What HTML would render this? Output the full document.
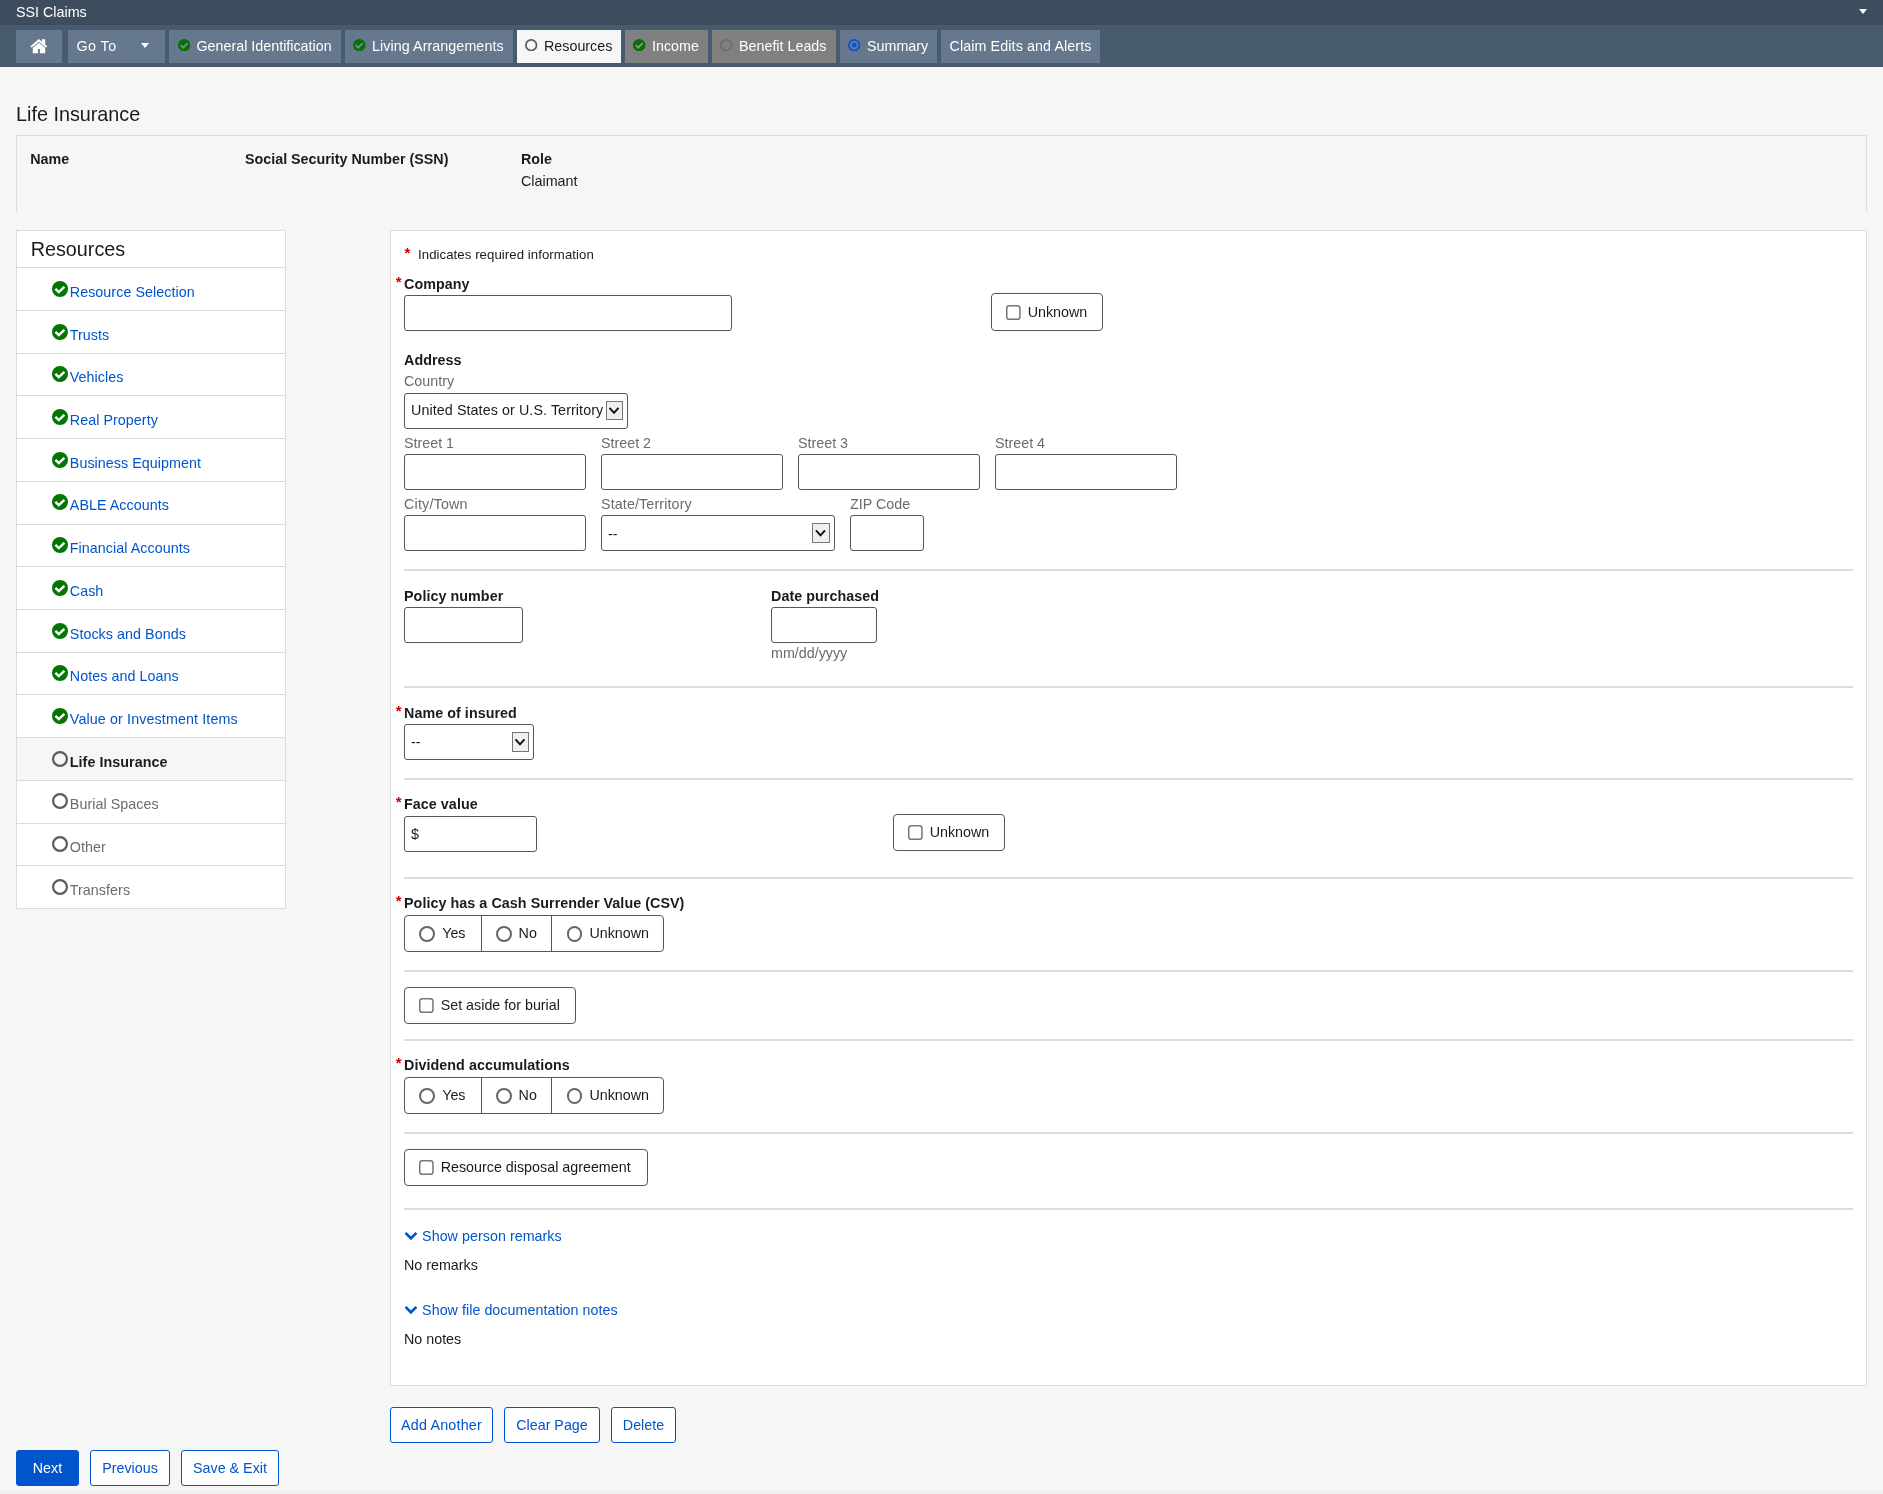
<!DOCTYPE html>
<html lang="en">
<head>
<meta charset="utf-8">
<title>SSI Claims - Life Insurance</title>
<style>
*{box-sizing:border-box;margin:0;padding:0}
html,body{width:1883px;height:1494px;overflow:hidden}
body{background:#f6f6f6;font-family:"Liberation Sans",Arial,sans-serif;font-size:14.3px;color:#1b1b1b;position:relative}
#pg{position:absolute;left:0;top:0;width:1883px;height:1494px;will-change:transform}
.abs{position:absolute}
#topbar{position:absolute;left:0;top:0;width:1883px;height:25px;background:#3d4d5d;color:#fff}
#topbar .t{position:absolute;left:16px;top:4px;font-size:14.3px;line-height:17px}
#topbar .caret{position:absolute;left:1859.3px;top:9px;width:0;height:0;border-left:4.7px solid transparent;border-right:4.7px solid transparent;border-top:5.6px solid #fff}
#nav{position:absolute;left:0;top:25px;width:1883px;height:42px;background:#485a6d}
.tab{position:absolute;top:5px;height:33px;background:#65788e;color:#fff;font-size:14.3px;line-height:33px;white-space:nowrap}
.tab .lbl{position:absolute;top:0}
.tab.cur{background:#f6f6f6;color:#1b1b1b}
.tab.dis{background:#808080;color:#fff}
.ic{position:absolute}
h1{position:absolute;left:16px;top:102px;font-size:19.8px;font-weight:normal;line-height:24px;color:#1b1b1b}
#person{position:absolute;left:16px;top:135px;width:1851px;height:77px;border:1px solid #dcdcdc;border-bottom:none}
#person b{position:absolute;font-size:14.3px;line-height:16px}
#person span{position:absolute;font-size:14.3px;line-height:16px}
#side{position:absolute;left:16px;top:230px;width:270px;height:679px;background:#fff;border:1px solid #dcdcdc}
#side h2{position:absolute;left:13.7px;top:6px;font-size:19.8px;font-weight:normal;line-height:24px}
.si{position:absolute;left:0;width:268px;height:43px;border-top:1px solid #dcdcdc;font-size:14.3px}
.si a{position:absolute;left:52.8px;top:16px;letter-spacing:.05px;line-height:17px;color:#0055cc;text-decoration:none}
.si.off a{color:#6b6b6b}
.si.cur{background:#f6f6f6}
.si.cur a{color:#1b1b1b;font-weight:bold}
.si svg{position:absolute;left:35px;top:13.1px}
.si.u a{top:15px}
.si.u svg{top:12.1px}
#form{position:absolute;left:390px;top:230px;width:1477px;height:1156px;background:#fff;border:1px solid #dcdcdc}
.lab{position:absolute;font-weight:bold;font-size:14.3px;line-height:16px;white-space:nowrap;letter-spacing:.06px}
.sub{position:absolute;font-size:14.3px;line-height:16px;color:#6b6b6b;white-space:nowrap}
.req{position:absolute;color:#c00;font-weight:bold;font-size:15px;line-height:16px}
.inp{position:absolute;height:36px;border:1px solid #565656;border-radius:3px;background:#fff}
.hr{position:absolute;left:13px;width:1449px;height:2px;background:#dcdcdc}
.dv{position:absolute;top:0;width:1px;height:100%;background:#565656}
.box{position:absolute;height:38px;border:1px solid #565656;border-radius:4px;background:#fff;font-size:14.5px;line-height:36px}
.cb{position:absolute;width:16px;height:16px}
.rd{position:absolute;width:15.8px;height:15.8px;border:2px solid #666;border-radius:50%;background:#fff}
.txt{position:absolute;font-size:14.3px;line-height:17px;white-space:nowrap}
.lnk{position:absolute;font-size:14.3px;line-height:17px;color:#0055cc;white-space:nowrap;letter-spacing:.03px}
.btn{position:absolute;height:36px;border:1px solid #0055cc;border-radius:3px;background:#fff;color:#0055cc;font-size:14.3px;line-height:34px;text-align:center}
.btn.pri{background:#0055cc;border-color:#0055cc;color:#fff}
.selarrow{position:absolute;width:17px;height:19px;border:1px solid #767676;background:#efefef}
#foot{position:absolute;left:0;top:1490px;width:1883px;height:4px;background:#f0f0f0}
</style>
</head>
<body>
<div id="pg">
<div id="topbar"><div class="t">SSI Claims</div><div class="caret"></div></div>
<div id="nav">
<div class="tab" style="left:16px;width:46px"><svg class="ic" style="left:14px;top:8px" width="18" height="16" viewBox="0 0 18 16"><path fill="#fff" d="M0.4 8.3 L8.9 1 L17.2 8.3 L15.9 9.8 L8.9 3.7 L1.7 9.8 Z"/><path fill="#fff" d="M12 1.2 H15.2 V7 L12 4.2 Z"/><path fill="#fff" d="M8.9 4.7 L15.2 10.1 V15.2 H9.9 V11 H8 V15.2 H2.8 V10.1 Z"/></svg></div>
<div class="tab" style="left:68px;width:97px"><span class="lbl" style="left:8.4px;word-spacing:.3px;letter-spacing:.38px">Go To</span><span class="abs" style="left:73px;top:13px;width:0;height:0;border-left:4.5px solid transparent;border-right:4.5px solid transparent;border-top:5.5px solid #fff"></span></div>
<div class="tab" style="left:169px;width:172px"><svg class="ic ck" style="left:9px;top:8.7px" width="12.4" height="12.4" viewBox="0 0 12.4 12.4"><circle cx="6.2" cy="6.2" r="6.2" fill="#057205"/><path d="M2.7 6.2 L5.2 8.7 L9.7 4.2" fill="none" stroke="#7a8ba0" stroke-width="1.7"/></svg><span class="lbl" style="left:27.5px">General Identification</span></div>
<div class="tab" style="left:345px;width:168px"><svg class="ic ck" style="left:8.3px;top:8.7px" width="12.4" height="12.4" viewBox="0 0 12.4 12.4"><circle cx="6.2" cy="6.2" r="6.2" fill="#057205"/><path d="M2.7 6.2 L5.2 8.7 L9.7 4.2" fill="none" stroke="#7a8ba0" stroke-width="1.7"/></svg><span class="lbl" style="left:27px;letter-spacing:.07px">Living Arrangements</span></div>
<div class="tab cur" style="left:517px;width:104px"><svg class="ic" style="left:8.4px;top:8.6px" width="12.4" height="12.4" viewBox="0 0 12.4 12.4"><circle cx="6.2" cy="6.2" r="5.3" fill="none" stroke="#5c5c5c" stroke-width="1.7"/></svg><span class="lbl" style="left:27px">Resources</span></div>
<div class="tab dis" style="left:625px;width:83px"><svg class="ic ck" style="left:8.3px;top:8.7px" width="12.4" height="12.4" viewBox="0 0 12.4 12.4"><circle cx="6.2" cy="6.2" r="6.2" fill="#057205"/><path d="M2.7 6.2 L5.2 8.7 L9.7 4.2" fill="none" stroke="#939393" stroke-width="1.7"/></svg><span class="lbl" style="left:27px">Income</span></div>
<div class="tab dis" style="left:712px;width:124px"><svg class="ic" style="left:8.4px;top:8.6px" width="12.4" height="12.4" viewBox="0 0 12.4 12.4"><circle cx="6.2" cy="6.2" r="5.3" fill="none" stroke="#6c6c6c" stroke-width="1.7"/></svg><span class="lbl" style="left:27px">Benefit Leads</span></div>
<div class="tab" style="left:840px;width:97px"><svg class="ic" style="left:8.3px;top:8.7px" width="12.4" height="12.4" viewBox="0 0 12.4 12.4"><circle cx="6.2" cy="6.2" r="5.3" fill="none" stroke="#0b50d8" stroke-width="1.7"/><circle cx="6.2" cy="6.2" r="2.4" fill="#0b50d8"/></svg><span class="lbl" style="left:27px">Summary</span></div>
<div class="tab" style="left:941px;width:159px"><span class="lbl" style="left:8.5px;letter-spacing:.1px">Claim Edits and Alerts</span></div>
</div>
<h1>Life Insurance</h1>
<div id="person">
<b style="left:13.3px;top:15px">Name</b>
<b style="left:228px;top:15px">Social Security Number (SSN)</b>
<b style="left:504px;top:15px">Role</b>
<span style="left:504px;top:37px">Claimant</span>
</div>
<div id="side">
<h2>Resources</h2>
<div class="si" style="top:36px;height:43px"><svg width="16" height="16" viewBox="0 0 16 16"><circle cx="8" cy="8" r="8" fill="#057505"/><path d="M3.4 7.8 L6.8 11.1 L12.4 5.8" fill="none" stroke="#fff" stroke-width="2.4"/></svg><a>Resource Selection</a></div>
<div class="si" style="top:79px;height:43px"><svg width="16" height="16" viewBox="0 0 16 16"><circle cx="8" cy="8" r="8" fill="#057505"/><path d="M3.4 7.8 L6.8 11.1 L12.4 5.8" fill="none" stroke="#fff" stroke-width="2.4"/></svg><a>Trusts</a></div>
<div class="si u" style="top:122px;height:42px"><svg width="16" height="16" viewBox="0 0 16 16"><circle cx="8" cy="8" r="8" fill="#057505"/><path d="M3.4 7.8 L6.8 11.1 L12.4 5.8" fill="none" stroke="#fff" stroke-width="2.4"/></svg><a>Vehicles</a></div>
<div class="si" style="top:164px;height:43px"><svg width="16" height="16" viewBox="0 0 16 16"><circle cx="8" cy="8" r="8" fill="#057505"/><path d="M3.4 7.8 L6.8 11.1 L12.4 5.8" fill="none" stroke="#fff" stroke-width="2.4"/></svg><a>Real Property</a></div>
<div class="si" style="top:207px;height:43px"><svg width="16" height="16" viewBox="0 0 16 16"><circle cx="8" cy="8" r="8" fill="#057505"/><path d="M3.4 7.8 L6.8 11.1 L12.4 5.8" fill="none" stroke="#fff" stroke-width="2.4"/></svg><a>Business Equipment</a></div>
<div class="si u" style="top:250px;height:43px"><svg width="16" height="16" viewBox="0 0 16 16"><circle cx="8" cy="8" r="8" fill="#057505"/><path d="M3.4 7.8 L6.8 11.1 L12.4 5.8" fill="none" stroke="#fff" stroke-width="2.4"/></svg><a>ABLE Accounts</a></div>
<div class="si u" style="top:293px;height:42px"><svg width="16" height="16" viewBox="0 0 16 16"><circle cx="8" cy="8" r="8" fill="#057505"/><path d="M3.4 7.8 L6.8 11.1 L12.4 5.8" fill="none" stroke="#fff" stroke-width="2.4"/></svg><a>Financial Accounts</a></div>
<div class="si" style="top:335px;height:43px"><svg width="16" height="16" viewBox="0 0 16 16"><circle cx="8" cy="8" r="8" fill="#057505"/><path d="M3.4 7.8 L6.8 11.1 L12.4 5.8" fill="none" stroke="#fff" stroke-width="2.4"/></svg><a>Cash</a></div>
<div class="si" style="top:378px;height:43px"><svg width="16" height="16" viewBox="0 0 16 16"><circle cx="8" cy="8" r="8" fill="#057505"/><path d="M3.4 7.8 L6.8 11.1 L12.4 5.8" fill="none" stroke="#fff" stroke-width="2.4"/></svg><a>Stocks and Bonds</a></div>
<div class="si u" style="top:421px;height:42px"><svg width="16" height="16" viewBox="0 0 16 16"><circle cx="8" cy="8" r="8" fill="#057505"/><path d="M3.4 7.8 L6.8 11.1 L12.4 5.8" fill="none" stroke="#fff" stroke-width="2.4"/></svg><a>Notes and Loans</a></div>
<div class="si" style="top:463px;height:43px"><svg width="16" height="16" viewBox="0 0 16 16"><circle cx="8" cy="8" r="8" fill="#057505"/><path d="M3.4 7.8 L6.8 11.1 L12.4 5.8" fill="none" stroke="#fff" stroke-width="2.4"/></svg><a style="letter-spacing:.12px">Value or Investment Items</a></div>
<div class="si cur" style="top:506px;height:43px"><svg width="16" height="16" viewBox="0 0 16 16"><circle cx="8" cy="8" r="6.9" fill="none" stroke="#5c5c5c" stroke-width="2.2"/></svg><a>Life Insurance</a></div>
<div class="si off u" style="top:549px;height:43px"><svg width="16" height="16" viewBox="0 0 16 16"><circle cx="8" cy="8" r="6.9" fill="none" stroke="#5c5c5c" stroke-width="2.2"/></svg><a>Burial Spaces</a></div>
<div class="si off u" style="top:592px;height:42px"><svg width="16" height="16" viewBox="0 0 16 16"><circle cx="8" cy="8" r="6.9" fill="none" stroke="#5c5c5c" stroke-width="2.2"/></svg><a>Other</a></div>
<div class="si off" style="top:634px;height:43px"><svg width="16" height="16" viewBox="0 0 16 16"><circle cx="8" cy="8" r="6.9" fill="none" stroke="#5c5c5c" stroke-width="2.2"/></svg><a>Transfers</a></div>
</div>
<div id="form">
<span class="req" style="left:13.4px;top:13.6px">*</span>
<span class="txt" style="left:27px;top:16px;font-size:13.2px;line-height:16px;letter-spacing:.07px">Indicates required information</span>
<span class="req" style="left:4.7px;top:43.4px">*</span>
<span class="lab" style="left:13px;top:45px">Company</span>
<span class="inp" style="left:13px;top:64px;width:328px;height:36px"></span>
<span class="box" style="left:600px;top:62px;width:112px;height:38px"><svg class="cb" style="left:14.2px;top:11px" viewBox="0 0 16 16"><rect x="0.75" y="0.75" width="13.2" height="13.5" rx="2.6" fill="#fff" stroke="#767676" stroke-width="1.5"/></svg><span class="txt" style="left:35.7px;top:9.5px">Unknown</span></span>
<span class="lab" style="left:13px;top:121px">Address</span>
<span class="sub" style="left:13px;top:142px">Country</span>
<span class="inp" style="left:13px;top:162px;width:224px;height:36px"><span class="txt" style="left:6px;top:7.5px;letter-spacing:0.085px">United States or U.S. Territory</span><span class="selarrow" style="left:201px;top:7px;width:17px;height:19px"><svg width="15" height="17" viewBox="0 0 15 17" style="position:absolute;left:0;top:0"><path d="M2.5 5.8 L7 10.8 L11.5 5.8" fill="none" stroke="#111" stroke-width="2"/></svg></span></span>
<span class="sub" style="left:13px;top:204px">Street 1</span>
<span class="inp" style="left:13px;top:223px;width:182px;height:36px"></span>
<span class="sub" style="left:210px;top:204px">Street 2</span>
<span class="inp" style="left:210px;top:223px;width:182px;height:36px"></span>
<span class="sub" style="left:407px;top:204px">Street 3</span>
<span class="inp" style="left:407px;top:223px;width:182px;height:36px"></span>
<span class="sub" style="left:604px;top:204px">Street 4</span>
<span class="inp" style="left:604px;top:223px;width:182px;height:36px"></span>
<span class="sub" style="left:13px;top:265px;letter-spacing:0.19px">City/Town</span>
<span class="inp" style="left:13px;top:284px;width:182px;height:36px"></span>
<span class="sub" style="left:210px;top:265px;letter-spacing:0.12px">State/Territory</span>
<span class="inp" style="left:210px;top:284px;width:234px;height:36px"><span class="txt" style="left:6px;top:9.5px">--</span><span class="selarrow" style="left:210px;top:7px;width:18px;height:20px"><svg width="16" height="18" viewBox="0 0 16 18" style="position:absolute;left:0;top:0"><path d="M3 6.3 L7.5 11.3 L12 6.3" fill="none" stroke="#111" stroke-width="2"/></svg></span></span>
<span class="sub" style="left:459px;top:265px">ZIP Code</span>
<span class="inp" style="left:459px;top:284px;width:74px;height:36px"></span>
<span class="hr" style="top:338px"></span>
<span class="lab" style="left:13px;top:357px">Policy number</span>
<span class="inp" style="left:13px;top:376px;width:119px;height:36px"></span>
<span class="lab" style="left:380px;top:357px">Date purchased</span>
<span class="inp" style="left:380px;top:376px;width:106px;height:36px"></span>
<span class="sub" style="left:380px;top:414px">mm/dd/yyyy</span>
<span class="hr" style="top:455px"></span>
<span class="req" style="left:4.7px;top:471.5px">*</span>
<span class="lab" style="left:13px;top:474px">Name of insured</span>
<span class="inp" style="left:13px;top:493px;width:130px;height:36px"><span class="txt" style="left:6px;top:8.5px">--</span><span class="selarrow" style="left:107px;top:7px;width:17px;height:20px"><svg width="15" height="18" viewBox="0 0 15 18" style="position:absolute;left:0;top:0"><path d="M2.5 6.3 L7 11.3 L11.5 6.3" fill="none" stroke="#111" stroke-width="2"/></svg></span></span>
<span class="hr" style="top:547px"></span>
<span class="req" style="left:4.7px;top:563.4px">*</span>
<span class="lab" style="left:13px;top:565px">Face value</span>
<span class="inp" style="left:13px;top:585px;width:133px;height:36px"><span class="txt" style="left:6px;top:8.5px">$</span></span>
<span class="box" style="left:502px;top:583px;width:112px;height:37px"><svg class="cb" style="left:14.2px;top:10px" viewBox="0 0 16 16"><rect x="0.75" y="0.75" width="13.2" height="13.5" rx="2.6" fill="#fff" stroke="#767676" stroke-width="1.5"/></svg><span class="txt" style="left:35.7px;top:8.5px">Unknown</span></span>
<span class="hr" style="top:646px"></span>
<span class="req" style="left:4.7px;top:662.4px">*</span>
<span class="lab" style="left:13px;top:664px">Policy has a Cash Surrender Value (CSV)</span>
<span class="box" style="left:13px;top:684px;width:260px;height:37px"><span class="rd" style="left:14.3px;top:10.3px"></span><span class="txt" style="left:37.2px;top:9px">Yes</span><span class="dv" style="left:76px"></span><span class="rd" style="left:91.1px;top:10.3px"></span><span class="txt" style="left:113.6px;top:9px">No</span><span class="dv" style="left:146px"></span><span class="rd" style="left:161.5px;top:10.3px"></span><span class="txt" style="left:184.4px;top:9px">Unknown</span></span>
<span class="hr" style="top:739px"></span>
<span class="box" style="left:13px;top:756px;width:172px;height:37px"><svg class="cb" style="left:14.2px;top:10px" viewBox="0 0 16 16"><rect x="0.75" y="0.75" width="13.2" height="13.5" rx="2.6" fill="#fff" stroke="#767676" stroke-width="1.5"/></svg><span class="txt" style="left:35.7px;top:8.5px">Set aside for burial</span></span>
<span class="hr" style="top:808px"></span>
<span class="req" style="left:4.7px;top:824.4px">*</span>
<span class="lab" style="left:13px;top:826px">Dividend accumulations</span>
<span class="box" style="left:13px;top:846px;width:260px;height:37px"><span class="rd" style="left:14.3px;top:10.3px"></span><span class="txt" style="left:37.2px;top:9px">Yes</span><span class="dv" style="left:76px"></span><span class="rd" style="left:91.1px;top:10.3px"></span><span class="txt" style="left:113.6px;top:9px">No</span><span class="dv" style="left:146px"></span><span class="rd" style="left:161.5px;top:10.3px"></span><span class="txt" style="left:184.4px;top:9px">Unknown</span></span>
<span class="hr" style="top:901px"></span>
<span class="box" style="left:13px;top:918px;width:244px;height:37px"><svg class="cb" style="left:14.2px;top:10px" viewBox="0 0 16 16"><rect x="0.75" y="0.75" width="13.2" height="13.5" rx="2.6" fill="#fff" stroke="#767676" stroke-width="1.5"/></svg><span class="txt" style="left:35.7px;top:8.5px">Resource disposal agreement</span></span>
<span class="hr" style="top:977px"></span>
<svg width="14" height="10" viewBox="0 0 14 10" style="position:absolute;left:13px;top:1000px"><path d="M1.5 1.9 L6.9 7.3 L12.4 1.9" fill="none" stroke="#0055cc" stroke-width="2.7"/></svg>
<span class="lnk" style="left:31.1px;top:997px">Show person remarks</span>
<span class="txt" style="left:13px;top:1026px">No remarks</span>
<svg width="14" height="10" viewBox="0 0 14 10" style="position:absolute;left:13px;top:1074px"><path d="M1.5 1.9 L6.9 7.3 L12.4 1.9" fill="none" stroke="#0055cc" stroke-width="2.7"/></svg>
<span class="lnk" style="left:31.1px;top:1071px">Show file documentation notes</span>
<span class="txt" style="left:13px;top:1100px">No notes</span>
</div><!--/form-->
<div class="btn" style="left:390px;top:1407px;width:103px;letter-spacing:.2px">Add Another</div>
<div class="btn" style="left:504px;top:1407px;width:96px">Clear Page</div>
<div class="btn" style="left:611px;top:1407px;width:65px">Delete</div>
<div class="btn pri" style="left:16px;top:1450px;width:63px">Next</div>
<div class="btn" style="left:90px;top:1450px;width:80px">Previous</div>
<div class="btn" style="left:181px;top:1450px;width:98px">Save &amp; Exit</div>
<div id="foot"></div>
</div>
</body>
</html>
